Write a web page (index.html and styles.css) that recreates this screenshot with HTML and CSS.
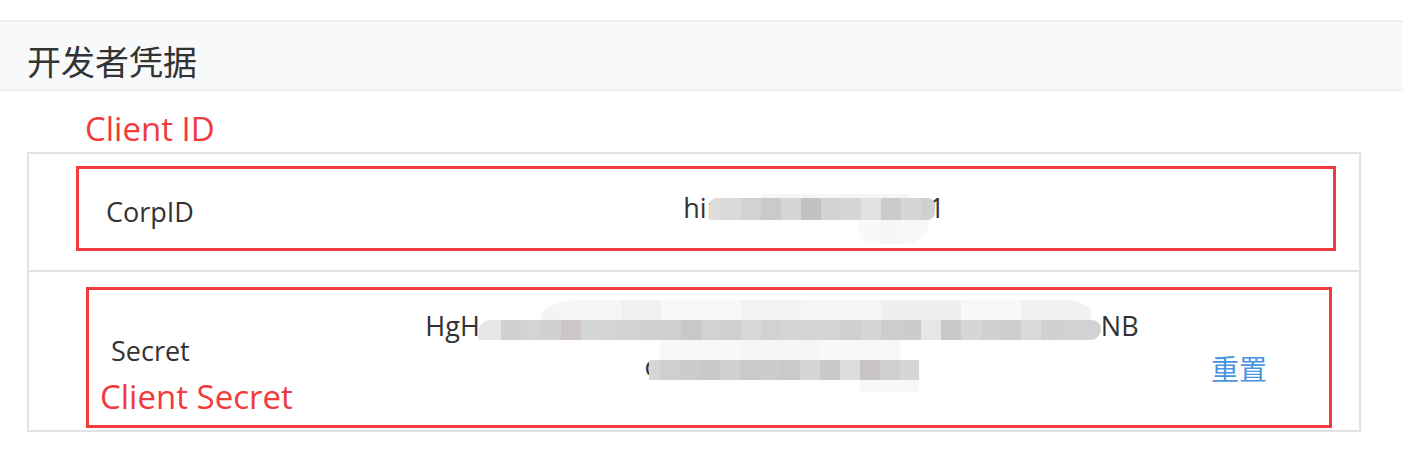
FILE: index.html
```html
<!DOCTYPE html>
<html lang="zh-CN">
<head>
<meta charset="utf-8">
<title>开发者凭据</title>
<link rel="stylesheet" href="styles.css">
</head>
<body>
<div class="top-gap"></div>
<header class="card-header">
  <h2 class="card-title">开发者凭据</h2>
</header>
<section class="card-body">
  <div class="note note-id">Client ID</div>
  <div class="cred-table">
    <div class="cred-row row-corp">
      <div class="cell label">CorpID</div>
      <div class="cell value value-corp"><span>hin</span><span class="mosaic m-corp"></span><span>1</span></div>
      <div class="cell action"></div>
      <div class="mark mark-corp"></div>
    </div>
    <div class="cred-row row-secret">
      <div class="cell label">Secret</div>
      <div class="cell value value-secret">
        <div class="line">HgH<span class="mosaic m-sec1"></span>NB</div>
        <div class="line">c<span class="mosaic m-sec2"></span></div>
      </div>
      <div class="cell action"><a class="reset">重置</a></div>
      <div class="mark mark-secret"><span class="note">Client Secret</span></div>
    </div>
  </div>
</section>
</body>
</html>
```

FILE: styles.css
```css
body {
  margin: 0;
  background: #ffffff;
  font-family: "Open Sans", "Noto Sans CJK SC", sans-serif;
  color: #333333;
}

.top-gap {
  height: 20px;
}

.card-header {
  height: 55px;
  padding-top: 11px;
  padding-bottom: 1px;
  border-top: 2px solid #eef0f4;
  border-bottom: 2px solid #eef0f4;
  background: #f8f9fb;
  display: flex;
  align-items: center;
  box-sizing: content-box;
}

.card-title {
  margin: 0;
  padding-left: 27px;
  font-family: "Noto Sans CJK SC", sans-serif;
  font-weight: 400;
  font-size: 34px;
  line-height: 1;
  color: #333333;
}

.note {
  color: #f03a3c;
  font-family: "Open Sans", sans-serif;
  font-size: 33px;
  line-height: 40px;
}

.note-id {
  margin: 18px 0 0 85px;
}

.cred-table {
  margin: 3px 0 0 27px;
  width: 1334px;
  box-sizing: border-box;
  border: 2px solid #e1e2e8;
}

.cred-row {
  position: relative;
  display: grid;
  grid-template-columns: 366px 1fr 190px;
  align-items: center;
}

.row-corp {
  height: 116px;
  border-bottom: 2px solid #e1e2e8;
}

.row-secret {
  height: 158px;
}

.label {
  font-size: 27px;
  line-height: 36px;
  padding-left: 77px;
}

.row-secret .label {
  padding-left: 82px;
}

.value {
  text-align: center;
  font-size: 27px;
  white-space: nowrap;
}

.value-corp {
  line-height: 36px;
  padding-left: 64px;
  margin-bottom: 9px;
}

.value-secret {
  line-height: 40px;
  margin-bottom: 11px;
}

.action {
  padding-left: 42px;
}

.reset {
  display: block;
  margin-top: 33px;
  color: #4a95e0;
  font-family: "Noto Sans CJK SC", sans-serif;
  font-size: 28px;
  line-height: 36px;
  text-decoration: none;
}

.mark {
  position: absolute;
  box-sizing: border-box;
  border: 3px solid #f03a3c;
  pointer-events: none;
}

.mark-corp {
  left: 47px;
  top: 12px;
  width: 1260px;
  height: 85px;
}

.mark-secret {
  left: 57px;
  top: 15px;
  width: 1246px;
  height: 141px;
  display: flex;
  align-items: flex-end;
  padding: 0 0 8px 11px;
}

/* pixelated blur blocks */
.mosaic {
  display: inline-block;
  position: relative;
}

.m-corp {
  width: 226px;
  height: 22px;
  margin-left: -14px;
  margin-right: -6px;
  vertical-align: -2px;
  border-radius: 8px 8px 8px 0;
  background: linear-gradient(90deg,
    #dcdcdc 0 12px, #d9d9d9 12px 32px, #d2d2d2 32px 52px, #cbcac8 52px 72px,
    #d6d6d6 72px 92px, #c1c2c1 92px 112px, #d2d2d2 112px 132px, #d6d6d6 132px 152px,
    #e2e2e2 152px 172px, #cbcbcb 172px 192px, #d6d6d6 192px 212px, #d0d0d0 212px);
}

.m-corp::before {
  content: "";
  position: absolute;
  left: 52px;
  top: -4px;
  width: 150px;
  height: 4px;
  background: #f6f6f6;
  border-radius: 6px 6px 0 0;
}

.m-corp::after {
  content: "";
  position: absolute;
  left: 150px;
  top: 22px;
  width: 70px;
  height: 24px;
  background: linear-gradient(90deg, #f9f9f9 0 22px, #f6f6f6 22px 42px, #f8f8f8 42px);
  border-radius: 0 0 22px 12px;
}

.m-sec1 {
  width: 623px;
  height: 20px;
  margin-left: -2px;
  vertical-align: -4px;
  border-radius: 14px 10px 12px 0;
  background: linear-gradient(90deg,
    #e6e6e6 0 23px,
    #d0d0d0 23px 43px, #d4d4d6 43px 63px, #d2d0d0 63px 83px, #cdc6c6 83px 103px,
    #d4d6d8 103px 123px, #d4d4d4 123px 143px, #d3d2d0 143px 163px, #d0d0d0 163px 183px,
    #d0d0d0 183px 203px, #c8c8c8 203px 223px, #d2d2d2 223px 243px, #cfcfcf 243px 263px,
    #d8d8d8 263px 283px, #d2d2d2 283px 303px, #d6d6d6 303px 323px, #d4d4d4 323px 343px,
    #d4d4d4 343px 363px, #d2cfcf 363px 383px, #d6d6d6 383px 403px, #cdcdcd 403px 423px,
    #cccccc 423px 443px, #e6e6e6 443px 463px, #c8c8c8 463px 483px, #d6d6d6 483px 503px,
    #d4d0d0 503px 523px, #cdcdcd 523px 543px, #dadada 543px 563px, #d0d0d0 563px 583px,
    #d2d2d2 583px);
}

.m-sec1::before {
  content: "";
  position: absolute;
  left: 63px;
  top: -20px;
  width: 550px;
  height: 20px;
  border-radius: 40px 30px 0 0 / 16px 12px 0 0;
  background: linear-gradient(90deg,
    #f4f4f4 0 20px, #f6f6f6 20px 80px, #f1f1f1 80px 120px, #f8f8f8 120px 200px,
    #f2f2f2 200px 260px, #f5f5f5 260px 340px, #efefef 340px 420px, #f8f8f8 420px 480px,
    #f1f1f1 480px);
}

.m-sec2 {
  width: 270px;
  height: 20px;
  margin-left: -8px;
  vertical-align: -4px;
  background: linear-gradient(90deg,
    #d6d6d6 0 11px,
    #cfcfcf 11px 31px, #cccccc 31px 51px, #cac8c8 51px 71px, #d0d0d0 71px 91px,
    #ccc9c9 91px 111px, #cccccc 111px 131px, #cacaca 131px 151px, #d6d6d6 151px 171px,
    #cbc8c8 171px 191px, #dcdedd 191px 211px, #c8c4c4 211px 231px, #d0d0d0 231px 251px,
    #d6d6d6 251px);
}

.m-sec2::before {
  content: "";
  position: absolute;
  left: 11px;
  top: -20px;
  width: 240px;
  height: 20px;
  background: linear-gradient(90deg, #f8f8f8 0 80px, #f5f6f5 80px 160px, #f8f8f8 160px);
}

.m-sec2::after {
  content: "";
  position: absolute;
  left: 211px;
  top: 20px;
  width: 59px;
  height: 12px;
  background: #f8f8f8;
}
```
